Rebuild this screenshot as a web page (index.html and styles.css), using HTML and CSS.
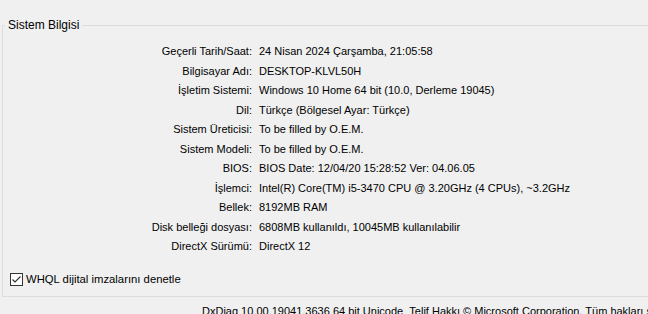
FILE: index.html
```html
<!DOCTYPE html>
<html lang="tr">
<head>
    <meta charset="UTF-8">
    <title>DirectX Tanılama Aracı</title>
    <link rel="stylesheet" href="styles.css">
</head>
<body>
    <div class="window">
        <!-- Sistem bilgisi grubu -->
        <fieldset class="group">
            <legend>Sistem Bilgisi</legend>
            <div class="info-grid">
                <div class="label">Geçerli Tarih/Saat:</div><div class="value">24 Nisan 2024 Çarşamba, 21:05:58</div>
                <div class="label">Bilgisayar Adı:</div><div class="value">DESKTOP-KLVL50H</div>
                <div class="label">İşletim Sistemi:</div><div class="value">Windows 10 Home 64 bit (10.0, Derleme 19045)</div>
                <div class="label">Dil:</div><div class="value">Türkçe (Bölgesel Ayar: Türkçe)</div>
                <div class="label">Sistem Üreticisi:</div><div class="value">To be filled by O.E.M.</div>
                <div class="label">Sistem Modeli:</div><div class="value">To be filled by O.E.M.</div>
                <div class="label">BIOS:</div><div class="value">BIOS Date: 12/04/20 15:28:52 Ver: 04.06.05</div>
                <div class="label">İşlemci:</div><div class="value">Intel(R) Core(TM) i5-3470 CPU @ 3.20GHz (4 CPUs), ~3.2GHz</div>
                <div class="label">Bellek:</div><div class="value">8192MB RAM</div>
                <div class="label">Disk belleği dosyası:</div><div class="value">6808MB kullanıldı, 10045MB kullanılabilir</div>
                <div class="label">DirectX Sürümü:</div><div class="value">DirectX 12</div>
            </div>
            <label class="check">
                <span class="box">
                    <svg width="11" height="11" viewBox="0 0 11 11"><path d="M1.5 5.5 L4 8 L9.5 2.5" fill="none" stroke="#333" stroke-width="1.2"/></svg>
                </span>
                WHQL dijital imzalarını denetle
            </label>
        </fieldset>

        <div class="footer">DxDiag 10.00.19041.3636 64 bit Unicode&nbsp;&nbsp;Telif Hakkı © Microsoft Corporation. Tüm hakları saklıdır.</div>
    </div>
</body>
</html>
```
FILE: styles.css
```css
body {
    margin: 0;
    padding: 0;
    background: #f0f0f0;
    color: #000;
    font-family: 'Liberation Sans', Arial, sans-serif;
    font-size: 11px;
    overflow: hidden;
}

.window {
    width: 648px;
    height: 314px;
    overflow: hidden;
}

.group {
    margin: 18px 0 0 2px;
    padding: 0;
    border: 1px solid #dcdcdc;
    border-right: none;
    height: 279px;
    box-sizing: border-box;
}

.group legend {
    margin-left: 2px;
    padding: 0 3px 0 3px;
    line-height: 14px;
    font-size: 12px;
}

.info-grid {
    display: grid;
    grid-template-columns: 249px auto;
    column-gap: 7px;
    row-gap: 5px;
    margin-top: 12px;
    font-size: 11px;
}

.label {
    text-align: right;
    line-height: 14.5px;
}

.value {
    line-height: 14.5px;
    white-space: nowrap;
}

.check {
    display: flex;
    align-items: center;
    gap: 3px;
    margin: 19px 0 0 7px;
    font-size: 11.3px;
}

.box {
    display: flex;
    width: 11px;
    height: 11px;
    border: 1px solid #333;
    background: #fff;
}

.footer {
    margin: 8px 0 0 202px;
    white-space: nowrap;
    font-size: 11px;
}
```
